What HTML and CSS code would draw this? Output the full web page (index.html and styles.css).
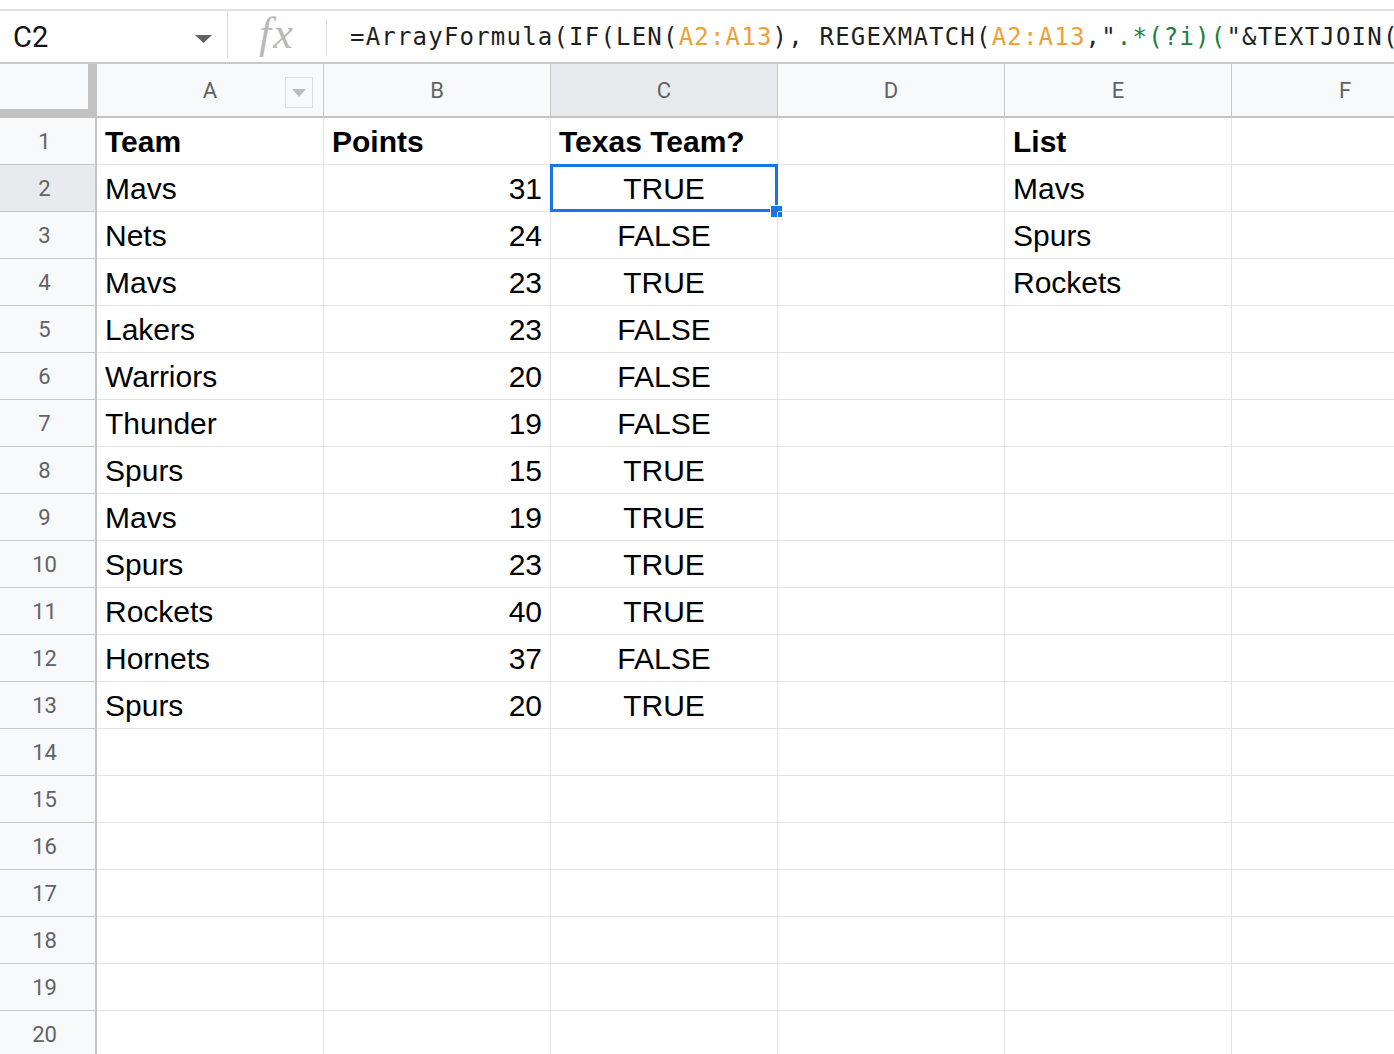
FILE: index.html
```html
<!DOCTYPE html>
<html>
<head>
<meta charset="utf-8">
<link rel="stylesheet" href="styles.css">
</head>
<body>
<div class="fbar">
  <div class="namebox">
    <span class="cellref">C2</span>
    <svg class="nb-arrow" width="17" height="8" viewBox="0 0 17 8"><path d="M0 0 L17 0 L8.5 8 Z" fill="#5f6368"/></svg>
  </div>
  <div class="sep1"></div>
  <div class="fx">fx</div>
  <div class="sep2"></div>
  <div class="formula">=ArrayFormula(IF(LEN(<span class="ref">A2:A13</span>), REGEXMATCH(<span class="ref">A2:A13</span>,"<span class="str">.*(?i)(</span>"&amp;TEXTJOIN(</div>
</div>

<div class="sheet">
  <div class="corner"></div>
  <div class="colh colA">A<span class="filter"><svg width="14" height="8" viewBox="0 0 14 8"><path d="M0 0 L14 0 L7 8 Z" fill="#bdbdbd"/></svg></span></div>
  <div class="colh">B</div>
  <div class="colh active">C</div>
  <div class="colh">D</div>
  <div class="colh">E</div>
  <div class="colh">F</div>

  <div class="rowh">1</div><div class="c b">Team</div><div class="c b">Points</div><div class="c b">Texas Team?</div><div class="c"></div><div class="c b">List</div><div class="c"></div>
  <div class="rowh active">2</div><div class="c">Mavs</div><div class="c n">31</div><div class="c m selected">TRUE<span class="sel"><span class="handle"></span></span></div><div class="c"></div><div class="c">Mavs</div><div class="c"></div>
  <div class="rowh">3</div><div class="c">Nets</div><div class="c n">24</div><div class="c m">FALSE</div><div class="c"></div><div class="c">Spurs</div><div class="c"></div>
  <div class="rowh">4</div><div class="c">Mavs</div><div class="c n">23</div><div class="c m">TRUE</div><div class="c"></div><div class="c">Rockets</div><div class="c"></div>
  <div class="rowh">5</div><div class="c">Lakers</div><div class="c n">23</div><div class="c m">FALSE</div><div class="c"></div><div class="c"></div><div class="c"></div>
  <div class="rowh">6</div><div class="c">Warriors</div><div class="c n">20</div><div class="c m">FALSE</div><div class="c"></div><div class="c"></div><div class="c"></div>
  <div class="rowh">7</div><div class="c">Thunder</div><div class="c n">19</div><div class="c m">FALSE</div><div class="c"></div><div class="c"></div><div class="c"></div>
  <div class="rowh">8</div><div class="c">Spurs</div><div class="c n">15</div><div class="c m">TRUE</div><div class="c"></div><div class="c"></div><div class="c"></div>
  <div class="rowh">9</div><div class="c">Mavs</div><div class="c n">19</div><div class="c m">TRUE</div><div class="c"></div><div class="c"></div><div class="c"></div>
  <div class="rowh">10</div><div class="c">Spurs</div><div class="c n">23</div><div class="c m">TRUE</div><div class="c"></div><div class="c"></div><div class="c"></div>
  <div class="rowh">11</div><div class="c">Rockets</div><div class="c n">40</div><div class="c m">TRUE</div><div class="c"></div><div class="c"></div><div class="c"></div>
  <div class="rowh">12</div><div class="c">Hornets</div><div class="c n">37</div><div class="c m">FALSE</div><div class="c"></div><div class="c"></div><div class="c"></div>
  <div class="rowh">13</div><div class="c">Spurs</div><div class="c n">20</div><div class="c m">TRUE</div><div class="c"></div><div class="c"></div><div class="c"></div>
  <div class="rowh">14</div><div class="c"></div><div class="c"></div><div class="c"></div><div class="c"></div><div class="c"></div><div class="c"></div>
  <div class="rowh">15</div><div class="c"></div><div class="c"></div><div class="c"></div><div class="c"></div><div class="c"></div><div class="c"></div>
  <div class="rowh">16</div><div class="c"></div><div class="c"></div><div class="c"></div><div class="c"></div><div class="c"></div><div class="c"></div>
  <div class="rowh">17</div><div class="c"></div><div class="c"></div><div class="c"></div><div class="c"></div><div class="c"></div><div class="c"></div>
  <div class="rowh">18</div><div class="c"></div><div class="c"></div><div class="c"></div><div class="c"></div><div class="c"></div><div class="c"></div>
  <div class="rowh">19</div><div class="c"></div><div class="c"></div><div class="c"></div><div class="c"></div><div class="c"></div><div class="c"></div>
  <div class="rowh">20</div><div class="c"></div><div class="c"></div><div class="c"></div><div class="c"></div><div class="c"></div><div class="c"></div>
</div>
</body>
</html>
```
FILE: styles.css
```css
html, body {
  margin: 0;
  padding: 0;
  background: #ffffff;
  overflow: hidden;
  height: 100%;
}
body {
  font-family: "Liberation Sans", Arial, sans-serif;
  color: #000;
}

/* formula bar */
.fbar {
  margin-top: 9px;
  border-top: 2px solid #e1e1e1;
  border-bottom: 2px solid #c9c9c9;
  height: 51px;
  display: flex;
  align-items: center;
  overflow: hidden;
  white-space: nowrap;
}
.namebox {
  width: 227px;
  flex: none;
  box-sizing: border-box;
  padding-left: 13px;
  padding-right: 15px;
  display: flex;
  align-items: center;
  justify-content: space-between;
  height: 100%;
}
.cellref {
  font-family: Roboto, "Liberation Sans", sans-serif;
  font-size: 29px;
  color: #111;
}
.nb-arrow {
  margin-top: 4px;
}
.sep1 {
  flex: none;
  width: 1px;
  height: 47px;
  background: #dcdcdc;
  align-self: flex-start;
}
.fx {
  flex: none;
  width: 98px;
  text-align: center;
  font-family: "Liberation Serif", "Times New Roman", serif;
  font-style: italic;
  font-size: 44px;
  letter-spacing: 2px;
  color: #b9b9b9;
  line-height: 1;
  margin-top: -6px;
}
.sep2 {
  flex: none;
  width: 1px;
  height: 37px;
  background: #dcdcdc;
  margin-top: 2px;
}
.formula {
  padding-left: 23px;
  font-family: "DejaVu Sans Mono", "Liberation Mono", monospace;
  font-size: 24px;
  letter-spacing: 1.2px;
  color: #1f1f1f;
  flex: 1;
  overflow: hidden;
}
.ref { color: #efa035; }
.str { color: #188038; }

/* sheet */
.sheet {
  display: grid;
  grid-template-columns: 97px repeat(6, 227px);
  grid-template-rows: 54px;
  grid-auto-rows: 47px;
  overflow: hidden;
}
.corner {
  background: #f8f9fa;
  border-right: 9px solid #c2c2c2;
  border-bottom: 9px solid #c2c2c2;
  box-sizing: border-box;
}
.colh {
  background: #f8f9fa;
  border-right: 1px solid #c7c7c7;
  border-bottom: 2px solid #c4c4c4;
  box-sizing: border-box;
  display: flex;
  align-items: center;
  justify-content: center;
  font-family: Roboto, "Liberation Sans", sans-serif;
  font-size: 22px;
  color: #5f6368;
  position: relative;
}
.colh.active {
  background: #e8eaed;
}
.filter {
  position: absolute;
  left: 188px;
  top: 13px;
  width: 28px;
  height: 31px;
  box-sizing: border-box;
  border: 1px solid #dadce0;
  background: #f8f9fa;
  display: flex;
  align-items: center;
  justify-content: center;
}
.rowh {
  background: #f8f9fa;
  border-right: 2px solid #c4c4c4;
  border-bottom: 1px solid #c7c7c7;
  box-sizing: border-box;
  display: flex;
  align-items: center;
  justify-content: center;
  padding-right: 6px;
  font-family: Roboto, "Liberation Sans", sans-serif;
  font-size: 22px;
  color: #5f6368;
}
.rowh.active {
  background: #e8eaed;
}
.c {
  border-right: 1px solid #e2e3e3;
  border-bottom: 1px solid #e2e3e3;
  box-sizing: border-box;
  display: flex;
  align-items: center;
  padding: 2px 8px 0 8px;
  font-size: 30px;
  white-space: nowrap;
  position: relative;
}
.c.b { font-weight: bold; }
.c.n { justify-content: flex-end; }
.c.m { justify-content: center; }

.sel {
  position: absolute;
  left: -1px;
  top: -1px;
  width: 228px;
  height: 48px;
  box-sizing: border-box;
  border: 3px solid #1a73e8;
}
.handle {
  position: absolute;
  right: -8px;
  bottom: -9px;
  width: 11px;
  height: 11px;
  background: #1a73e8;
  border: 1px solid #fff;
  box-sizing: content-box;
}
```
